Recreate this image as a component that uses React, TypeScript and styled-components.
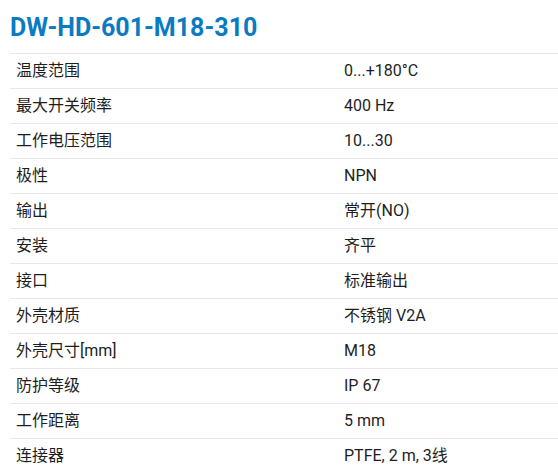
import styled, {createGlobalStyle} from "styled-components";

const GlobalStyle = createGlobalStyle`
  body {
    margin: 0;
    background: #fff;
    font-family: Roboto, "Noto Sans CJK SC", sans-serif;
  }
`

const Page = styled.div`
  padding: 14px 0 0 10px;
`

const Title = styled.h1`
  margin: 0 0 11px 0;
  font-size: 25px;
  line-height: 28px;
  font-weight: 700;
  color: #0a7bc2;
`

const SpecList = styled.div`
  border-top: 1px solid #e8e8e8;
`

const SpecRow = styled.div`
  display: grid;
  grid-template-columns: 334px 1fr;
  height: 34px;
  line-height: 34px;
  border-bottom: 1px solid #e8e8e8;
  font-size: 16px;
  color: #1e1e1e;
  white-space: nowrap;
`

const Label = styled.div`
  padding-left: 6px;
`

const Value = styled.div``

const specs: [string, string][] = [
    ["温度范围", "0...+180°C"],
    ["最大开关频率", "400 Hz"],
    ["工作电压范围", "10...30"],
    ["极性", "NPN"],
    ["输出", "常开(NO)"],
    ["安装", "齐平"],
    ["接口", "标准输出"],
    ["外壳材质", "不锈钢 V2A"],
    ["外壳尺寸[mm]", "M18"],
    ["防护等级", "IP 67"],
    ["工作距离", "5 mm"],
    ["连接器", "PTFE, 2 m, 3线"],
]

export default function App() {
    return (
        <Page>
            <GlobalStyle/>
            <Title>DW-HD-601-M18-310</Title>
            <SpecList>
                {specs.map(([label, value]) => (
                    <SpecRow key={label}>
                        <Label>{label}</Label>
                        <Value>{value}</Value>
                    </SpecRow>
                ))}
            </SpecList>
        </Page>
    )
}
